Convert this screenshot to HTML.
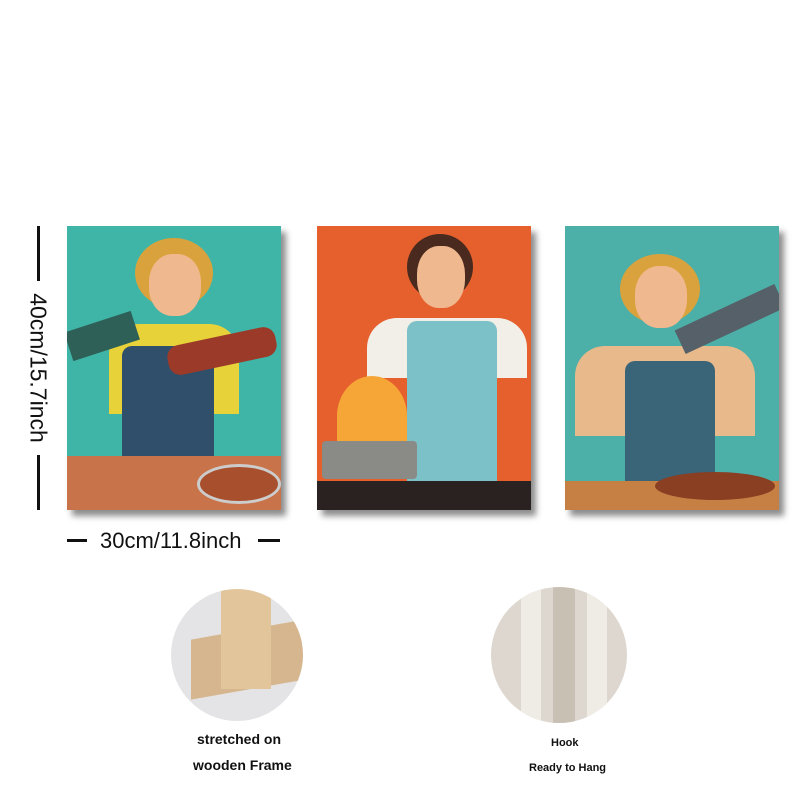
<!DOCTYPE html>
<html><head><meta charset="utf-8"><style>
body{margin:0;width:800px;height:800px;background:#fff;position:relative;overflow:hidden;font-family:"Liberation Sans",sans-serif}
.p{position:absolute;top:226px;width:214px;height:284px;box-shadow:5px 6px 6px rgba(0,0,0,.45);overflow:hidden}
.a{position:absolute}
</style></head><body>
<div class="p" style="left:67px;background:#3fb5a8">
 <div class="a" style="left:68px;top:12px;width:78px;height:70px;border-radius:50%;background:#d9a23c"></div>
 <div class="a" style="left:82px;top:28px;width:52px;height:62px;border-radius:45%;background:#f0b88e"></div>
 <div class="a" style="left:42px;top:98px;width:130px;height:90px;border-radius:30px 30px 0 0;background:#e8d23a"></div>
 <div class="a" style="left:55px;top:120px;width:92px;height:140px;background:#2f4f6a;border-radius:10px"></div>
 <div class="a" style="left:0;top:95px;width:70px;height:30px;background:#2f6058;transform:rotate(-18deg)"></div>
 <div class="a" style="left:100px;top:110px;width:110px;height:30px;background:#9c3a2a;border-radius:12px;transform:rotate(-12deg)"></div>
 <div class="a" style="left:0;top:230px;width:214px;height:54px;background:#c9734a"></div>
 <div class="a" style="left:130px;top:238px;width:78px;height:34px;border-radius:50%;background:#a8502e;border:3px solid #ccc"></div>
</div>
<div class="p" style="left:317px;background:#e6602e">
 <div class="a" style="left:90px;top:8px;width:66px;height:66px;border-radius:50%;background:#4a2a1e"></div>
 <div class="a" style="left:100px;top:20px;width:48px;height:62px;border-radius:45%;background:#f0b88e"></div>
 <div class="a" style="left:50px;top:92px;width:160px;height:60px;border-radius:30px 30px 0 0;background:#f1efe8"></div>
 <div class="a" style="left:90px;top:95px;width:90px;height:190px;background:#7cc0c8;border-radius:10px 10px 0 0"></div>
 <div class="a" style="left:20px;top:150px;width:70px;height:80px;border-radius:50% 50% 20% 20%;background:#f6a636"></div>
 <div class="a" style="left:5px;top:215px;width:95px;height:38px;background:#8a8a86;border-radius:4px"></div>
 <div class="a" style="left:0;top:255px;width:214px;height:29px;background:#2a2220"></div>
</div>
<div class="p" style="left:565px;background:#4cb0a8">
 <div class="a" style="left:55px;top:28px;width:80px;height:70px;border-radius:50%;background:#d9a23c"></div>
 <div class="a" style="left:70px;top:40px;width:52px;height:62px;border-radius:45%;background:#f0b88e"></div>
 <div class="a" style="left:10px;top:120px;width:180px;height:90px;border-radius:30px 30px 0 0;background:#e8b98a"></div>
 <div class="a" style="left:60px;top:135px;width:90px;height:130px;background:#3a6478;border-radius:10px"></div>
 <div class="a" style="left:110px;top:80px;width:110px;height:26px;background:#556068;transform:rotate(-25deg)"></div>
 <div class="a" style="left:0;top:255px;width:214px;height:29px;background:#c68044"></div>
 <div class="a" style="left:90px;top:246px;width:120px;height:28px;border-radius:50%;background:#8a3e22"></div>
</div>
<div class="a" style="left:37px;top:226px;width:3px;height:55px;background:#111"></div>
<div class="a" style="left:37px;top:455px;width:3px;height:55px;background:#111"></div>
<div class="a" style="left:38px;top:368px;transform:translate(-50%,-50%) rotate(90deg);font-size:23px;white-space:nowrap;color:#111">40cm/15.7inch</div>
<div class="a" style="left:67px;top:539px;width:20px;height:3px;background:#111"></div>
<div class="a" style="left:258px;top:539px;width:22px;height:3px;background:#111"></div>
<div class="a" style="left:100px;top:528px;font-size:22px;color:#111">30cm/11.8inch</div>
<div class="a" style="left:171px;top:589px;width:132px;height:132px;border-radius:50%;background:#e4e4e6;overflow:hidden">
 <div class="a" style="left:20px;top:40px;width:120px;height:60px;background:#d6b68e;transform:skewY(-10deg)"></div>
 <div class="a" style="left:50px;top:0;width:50px;height:100px;background:#e2c59a"></div>
</div>
<div class="a" style="left:491px;top:587px;width:136px;height:136px;border-radius:50%;background:#ddd7cf;overflow:hidden">
 <div class="a" style="left:30px;top:0;width:20px;height:136px;background:#efece6"></div>
 <div class="a" style="left:62px;top:0;width:22px;height:136px;background:#c9c0b4"></div>
 <div class="a" style="left:96px;top:0;width:20px;height:136px;background:#efece6"></div>
</div>
<div class="a" style="left:197px;top:731px;font-size:14px;font-weight:bold;color:#111">stretched on</div>
<div class="a" style="left:193px;top:757px;font-size:14px;font-weight:bold;color:#111">wooden Frame</div>
<div class="a" style="left:551px;top:737px;font-size:11px;font-weight:bold;color:#111">Hook</div>
<div class="a" style="left:529px;top:762px;font-size:11px;font-weight:bold;color:#111">Ready to Hang</div>
</body></html>
